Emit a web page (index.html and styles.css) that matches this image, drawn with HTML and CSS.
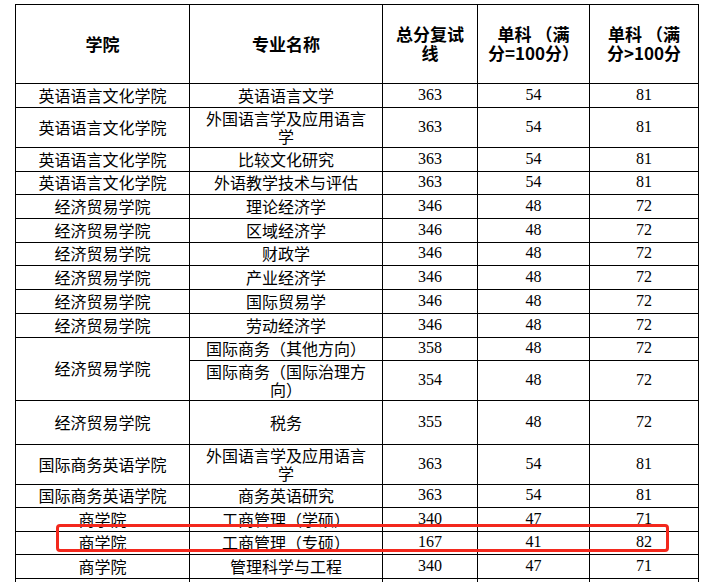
FILE: index.html
```html
<!DOCTYPE html>
<html lang="zh-CN">
<head>
<meta charset="utf-8">
<title>复试分数线</title>
<link rel="stylesheet" href="styles.css">
</head>
<body>
<div class="page">
  <table class="score">
    <colgroup>
      <col class="c1"><col class="c2"><col class="c3"><col class="c4"><col class="c5">
    </colgroup>
    <thead>
      <tr class="h79">
        <th>学院</th>
        <th>专业名称</th>
        <th>总分复试<br>线</th>
        <th>单科 （满<br>分=100分）</th>
        <th>单科 （满<br>分&gt;100分</th>
      </tr>
    </thead>
    <tbody>
      <tr class="h24"><td>英语语言文化学院</td><td>英语语言文学</td><td class="n">363</td><td class="n">54</td><td class="n">81</td></tr>
      <tr class="h40"><td>英语语言文化学院</td><td>外国语言学及应用语言<br>学</td><td class="n">363</td><td class="n">54</td><td class="n">81</td></tr>
      <tr class="h24"><td>英语语言文化学院</td><td>比较文化研究</td><td class="n">363</td><td class="n">54</td><td class="n">81</td></tr>
      <tr class="h23"><td>英语语言文化学院</td><td>外语教学技术与评估</td><td class="n">363</td><td class="n">54</td><td class="n">81</td></tr>
      <tr class="h24"><td>经济贸易学院</td><td>理论经济学</td><td class="n">346</td><td class="n">48</td><td class="n">72</td></tr>
      <tr class="h24"><td>经济贸易学院</td><td>区域经济学</td><td class="n">346</td><td class="n">48</td><td class="n">72</td></tr>
      <tr class="h23"><td>经济贸易学院</td><td>财政学</td><td class="n">346</td><td class="n">48</td><td class="n">72</td></tr>
      <tr class="h24"><td>经济贸易学院</td><td>产业经济学</td><td class="n">346</td><td class="n">48</td><td class="n">72</td></tr>
      <tr class="h24"><td>经济贸易学院</td><td>国际贸易学</td><td class="n">346</td><td class="n">48</td><td class="n">72</td></tr>
      <tr class="h24"><td>经济贸易学院</td><td>劳动经济学</td><td class="n">346</td><td class="n">48</td><td class="n">72</td></tr>
      <tr class="h23"><td rowspan="2">经济贸易学院</td><td>国际商务（其他方向）</td><td class="n">358</td><td class="n">48</td><td class="n">72</td></tr>
      <tr class="h40"><td>国际商务（国际治理方<br>向）</td><td class="n">354</td><td class="n">48</td><td class="n">72</td></tr>
      <tr class="h44"><td>经济贸易学院</td><td>税务</td><td class="n">355</td><td class="n">48</td><td class="n">72</td></tr>
      <tr class="h40"><td>国际商务英语学院</td><td>外国语言学及应用语言<br>学</td><td class="n">363</td><td class="n">54</td><td class="n">81</td></tr>
      <tr class="h23"><td>国际商务英语学院</td><td>商务英语研究</td><td class="n">363</td><td class="n">54</td><td class="n">81</td></tr>
      <tr class="h24"><td>商学院</td><td>工商管理（学硕）</td><td class="n">340</td><td class="n">47</td><td class="n">71</td></tr>
      <tr class="h23"><td>商学院</td><td>工商管理（专硕）</td><td class="n">167</td><td class="n">41</td><td class="n">82</td></tr>
      <tr class="h24"><td>商学院</td><td>管理科学与工程</td><td class="n">340</td><td class="n">47</td><td class="n">71</td></tr>
      <tr class="h24"><td>商学院</td><td>企业管理</td><td class="n">340</td><td class="n">47</td><td class="n">71</td></tr>
    </tbody>
  </table>
  <div class="highlight"></div>
</div>
</body>
</html>
```

FILE: styles.css
```css
html, body {
  margin: 0;
  padding: 0;
  background: #ffffff;
}

body {
  width: 711px;
  height: 582px;
  overflow: hidden;
}

.page {
  position: relative;
  padding: 4px 0 0 15px;
}

.score {
  border-collapse: collapse;
  table-layout: fixed;
  width: 684px;
  font-family: "Noto Sans CJK SC", "Noto Sans", sans-serif;
  font-size: 16px;
  color: #000000;
}

.c1 { width: 174px; }
.c2 { width: 193px; }
.c3 { width: 95px; }
.c4 { width: 112px; }
.c5 { width: 109px; }

.score th,
.score td {
  border: 1px solid #000000;
  padding: 0 0 2px 0;
  text-align: center;
  vertical-align: middle;
  line-height: 18px;
  white-space: nowrap;
}

.score th {
  font-size: 17px;
  font-weight: 700;
  line-height: 19px;
}

.score td.n {
  font-family: "Liberation Serif", "Times New Roman", serif;
  font-size: 16px;
}

.h79 { height: 79px; }
.h44 { height: 44px; }
.h40 { height: 40px; }
.h24 { height: 24px; }
.h23 { height: 23px; }

.highlight {
  position: absolute;
  left: 56px;
  top: 524px;
  width: 607px;
  height: 22px;
  border: 3px solid #f3281d;
  border-radius: 4px;
  pointer-events: none;
}
```
